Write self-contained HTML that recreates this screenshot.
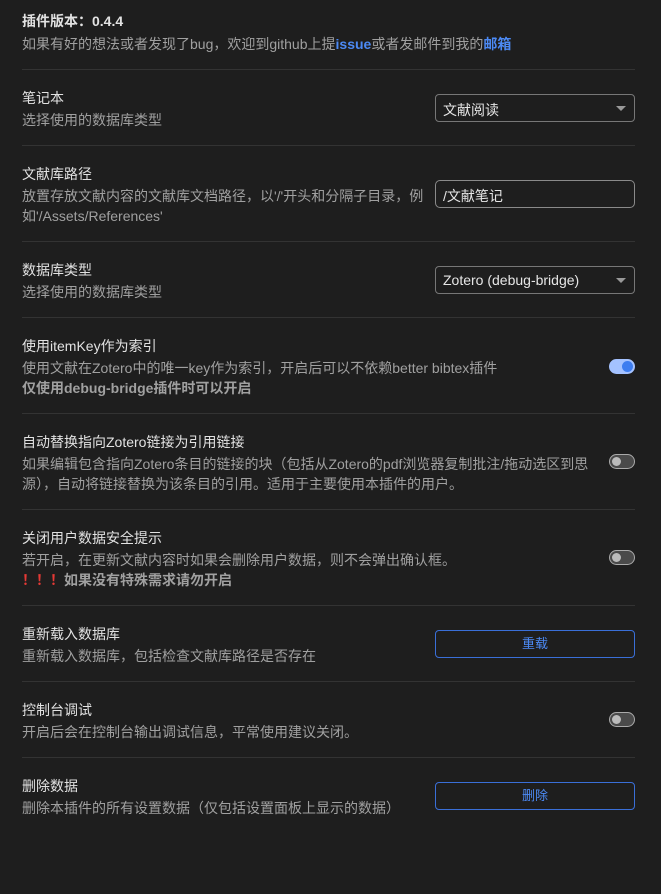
<!DOCTYPE html>
<html><head><meta charset="utf-8"><style>
*{margin:0;padding:0;box-sizing:border-box}
body{width:661px;height:894px;background:#1e1e1e;font-family:"Liberation Sans","Noto Sans CJK SC",sans-serif;position:relative;overflow:hidden;color:#d8d8d8}
.a{position:absolute;white-space:nowrap}
.t{font-size:14px;color:#e2e2e2;left:22px}
.d{font-size:14px;color:#a0a0a0;left:22px;line-height:20px}
.hr{position:absolute;left:22px;width:613px;height:1px;background:#333}
.sel{position:absolute;left:435px;width:200px;height:28px;border:1px solid #777;border-radius:4px;font-size:14px;color:#e6e6e6;padding:5px 7px}
.sel:after{content:"";position:absolute;right:8px;top:11px;border-left:5px solid transparent;border-right:5px solid transparent;border-top:5px solid #999}
.sel.in{border-color:#8a8a8a;border-radius:5px}
.sel.in:after{display:none}
.tg{position:absolute;left:609px;width:26px;height:15px;border-radius:8px;background:#4a4a4a;border:1px solid #aaa}
.tg i{position:absolute;left:2px;top:2px;width:9px;height:9px;border-radius:50%;background:#bbb}
.tg.on{background:#a4c2ff;border-color:#a4c2ff}
.tg.on i{left:12px;top:1px;width:11px;height:11px;background:#3d7df0}
.btn{position:absolute;left:435px;width:200px;height:28px;border:1px solid #3a6fd8;border-radius:4px;color:#4c8af5;font-size:13px;text-align:center;line-height:26px}
b{font-weight:bold}
.lk{color:#4c8af5;font-weight:bold}
</style></head><body>
<div class="a t" style="top:11px;font-weight:bold">插件版本：0.4.4</div>
<div class="a d" style="top:34px">如果有好的想法或者发现了bug，欢迎到github上提<span class="lk">issue</span>或者发邮件到我的<span class="lk">邮箱</span></div>
<div class="hr" style="top:69px"></div>

<div class="a t" style="top:88px">笔记本</div>
<div class="a d" style="top:110px">选择使用的数据库类型</div>
<div class="sel" style="top:94px">文献阅读</div>
<div class="hr" style="top:145px"></div>

<div class="a t" style="top:164px">文献库路径</div>
<div class="a d" style="top:186px">放置存放文献内容的文献库文档路径，以'/'开头和分隔子目录，例<br>如'/Assets/References'</div>
<div class="sel in" style="top:180px">/文献笔记</div>
<div class="hr" style="top:241px"></div>

<div class="a t" style="top:260px">数据库类型</div>
<div class="a d" style="top:282px">选择使用的数据库类型</div>
<div class="sel" style="top:266px">Zotero (debug-bridge)</div>
<div class="hr" style="top:317px"></div>

<div class="a t" style="top:336px">使用itemKey作为索引</div>
<div class="a d" style="top:358px">使用文献在Zotero中的唯一key作为索引，开启后可以不依赖better bibtex插件<br><b>仅使用debug-bridge插件时可以开启</b></div>
<div class="tg on" style="top:359px"><i></i></div>
<div class="hr" style="top:413px"></div>

<div class="a t" style="top:432px">自动替换指向Zotero链接为引用链接</div>
<div class="a d" style="top:454px">如果编辑包含指向Zotero条目的链接的块（包括从Zotero的pdf浏览器复制批注/拖动选区到思<br>源），自动将链接替换为该条目的引用。适用于主要使用本插件的用户。</div>
<div class="tg" style="top:454px"><i></i></div>
<div class="hr" style="top:509px"></div>

<div class="a t" style="top:528px">关闭用户数据安全提示</div>
<div class="a d" style="top:550px">若开启，在更新文献内容时如果会删除用户数据，则不会弹出确认框。<br><b><span style="color:#e53935">！！！</span>如果没有特殊需求请勿开启</b></div>
<div class="tg" style="top:550px"><i></i></div>
<div class="hr" style="top:605px"></div>

<div class="a t" style="top:624px">重新载入数据库</div>
<div class="a d" style="top:646px">重新载入数据库，包括检查文献库路径是否存在</div>
<div class="btn" style="top:630px">重载</div>
<div class="hr" style="top:681px"></div>

<div class="a t" style="top:700px">控制台调试</div>
<div class="a d" style="top:722px">开启后会在控制台输出调试信息，平常使用建议关闭。</div>
<div class="tg" style="top:712px"><i></i></div>
<div class="hr" style="top:757px"></div>

<div class="a t" style="top:776px">删除数据</div>
<div class="a d" style="top:798px">删除本插件的所有设置数据（仅包括设置面板上显示的数据）</div>
<div class="btn" style="top:782px">删除</div>
</body></html>
